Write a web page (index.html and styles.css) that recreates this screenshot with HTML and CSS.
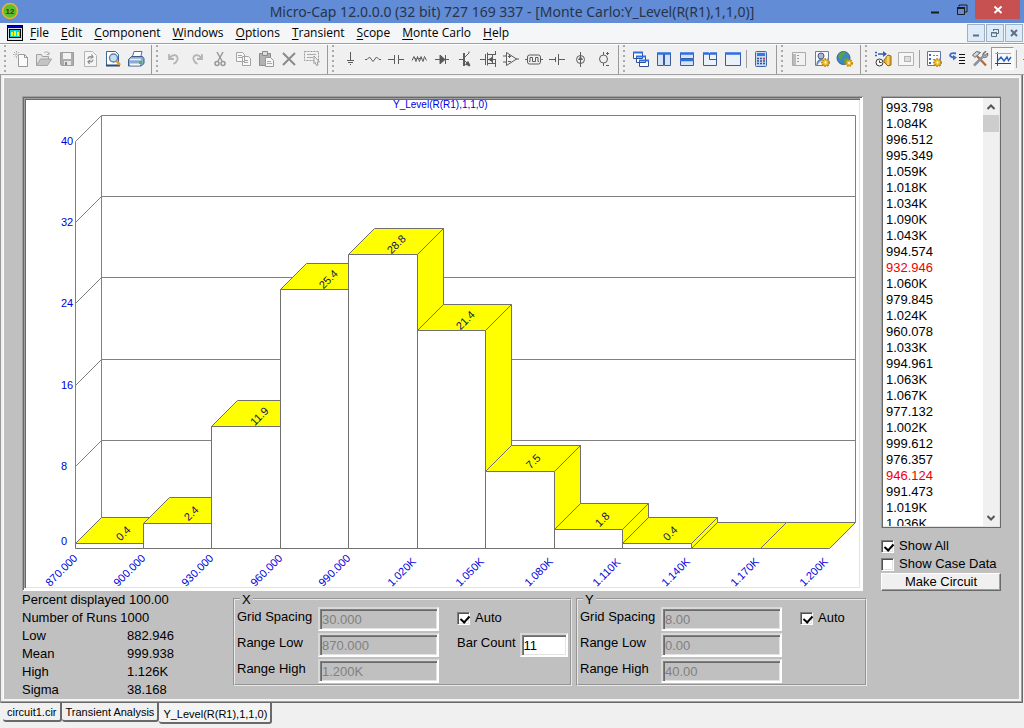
FILE: index.html
```html
<!DOCTYPE html>
<html lang="en">
<head>
<meta charset="utf-8">
<title>Micro-Cap 12.0.0.0 - Monte Carlo</title>
<link rel="stylesheet" href="styles.css">
</head>
<body>
<div class="app">
  <header class="titlebar">
    <svg class="app-icon" width="18" height="18" viewBox="0 0 18 18"><circle cx="9" cy="9" r="7.5" fill="#5cc02c" stroke="#f0b030" stroke-width="1.6"/><text x="9" y="12" text-anchor="middle" class="app-icon-text">12</text></svg>
    <h1 class="title">Micro-Cap 12.0.0.0 (32 bit) 727 169 337 - [Monte Carlo:Y_Level(R(R1),1,1,0)]</h1>
    <div class="window-buttons">
      <button class="wbtn" aria-label="Minimize"><svg width="14" height="14" viewBox="0 0 14 14"><path d="M3 9.500h8" stroke="#1c1c1c" stroke-width="2"/></svg></button>
      <button class="wbtn" aria-label="Restore"><svg width="14" height="14" viewBox="0 0 14 14" fill="none" stroke="#1c1c1c"><path d="M4 3.500V2h8v7h-2"/><path d="M2.500 4.500h7v7h-7z"/><path d="M2 5h8" stroke-width="2"/></svg></button>
      <button class="wbtn close" aria-label="Close"><svg width="14" height="14" viewBox="0 0 14 14"><path d="M3.500 3.500l7 6.500M10.500 3.500l-7 6.500" stroke="#fff" stroke-width="2"/></svg></button>
    </div>
  </header>

  <nav class="menubar">
    <svg width="16" height="16" viewBox="0 0 16 16"><path d="M0 0h16v16H0z" fill="#000"/><path d="M1 1h14v1H1z" fill="#0000d0"/><path d="M1 3h14v12H1z" fill="#ddd"/><path d="M2 4h12v9H2z" fill="#000"/><path d="M3 5h10v7H3z" fill="#00d8d8"/><path d="M4 7h2v4H4zM7 6h2v5H7zM10 7h2v4h-2z" fill="#ff0"/></svg>
    <div class="menus">
      <button><u>F</u>ile</button><button><u>E</u>dit</button><button><u>C</u>omponent</button><button><u>W</u>indows</button><button><u>O</u>ptions</button><button><u>T</u>ransient</button><button><u>S</u>cope</button><button><u>M</u>onte Carlo</button><button><u>H</u>elp</button>
    </div>
    <div class="mdi-buttons">
      <button aria-label="Minimize document"><svg width="12" height="12" viewBox="0 0 12 12"><path d="M3 8.500h6" stroke="#5d7083" stroke-width="2"/></svg></button>
      <button aria-label="Restore document"><svg width="12" height="12" viewBox="0 0 12 12" fill="none" stroke="#5d7083"><path d="M4.500 4V2.500h5v4H8M4 2.500h6M2.500 5.500h5v4h-5zM2 6h6"/></svg></button>
      <button aria-label="Close document"><svg width="12" height="12" viewBox="0 0 12 12"><path d="M3 3l6 6M9 3L3 9" stroke="#5d7083" stroke-width="2"/></svg></button>
    </div>
  </nav>

  <div class="toolbar">
    <div class="group">
      <button aria-label="New"><svg viewBox="0 0 18 18"><path d="M6.500 4.500h6l3 3v9h-9z" fill="#fafafa" stroke="#999"/><path d="M12.500 4.500v3h3" fill="none" stroke="#999"/><path d="M4.500 1v8M1 4.500h7M2 2l5 5M7 2L2 7" stroke="#aaa" stroke-dasharray="1.500 1"/></svg></button>
      <button aria-label="Open"><svg viewBox="0 0 18 18"><path d="M1.500 15.500v-11h5l1 2h6v3" fill="#e2e2e2" stroke="#a0a0a0"/><path d="M1.500 15.500l4-6.500h11l-4 6.500z" fill="#c4c4c4" stroke="#a4a4a4"/><path d="M9 3c2-2 4-1 5 1m0-2v2.500h-2.500" fill="none" stroke="#aaa"/></svg></button>
      <button aria-label="Save"><svg viewBox="0 0 18 18"><path d="M2.500 2.500h13v13h-12l-1-1z" fill="#acacac" stroke="#9c9c9c"/><path d="M5 3h8v6H5z" fill="#f2f2f2"/><path d="M6 11h7v4H6z" fill="#e5e5e5"/><path d="M7 12h2v3H7z" fill="#888"/></svg></button>
      <button aria-label="Revert"><svg viewBox="0 0 18 18"><path d="M3.500 1.500h8l4 4v11h-12z" fill="#f6f6f6" stroke="#b4b4b4"/><path d="M7 9c0-2 2-3 4-2M10.500 4.500L12 7l-2.500 1.500M12 9.500c0 2-2 3-4 2M8.500 14L7 11.500 9.500 10" fill="none" stroke="#8c8c8c" stroke-width="1.200"/></svg></button>
      <button aria-label="Print preview"><svg viewBox="0 0 18 18"><path d="M2.500 1.500h9l3 3v11h-12z" fill="#fff" stroke="#416291"/><path d="M2 15.500h14" stroke="#294978" stroke-width="2"/><circle cx="9.500" cy="8" r="4" fill="#bfe0f5" stroke="#63839f" stroke-width="1.400"/><path d="M12.500 11l3.500 4" stroke="#e09a35" stroke-width="2.500"/></svg></button>
      <button aria-label="Print"><svg viewBox="0 0 18 18"><path d="M5 8l2-6.500h8L13.500 8z" fill="#fff" stroke="#53709b"/><path d="M1.500 9.500l3-3h11l1.500 2v5l-3 2.500h-12.500z" fill="#8faace" stroke="#3b5c8d"/><path d="M3 9.500h11" stroke="#e9f2fc" stroke-width="1.500"/><path d="M3 13.500h10v2H3z" fill="#f8f8f8"/><path d="M12 11h3v3h-3z" fill="#36c832"/></svg></button>
    </div>
    <div class="group">
      <button aria-label="Undo"><svg viewBox="0 0 18 18"><path d="M4 4v5h5M4.500 8.500c3-5 9-4 8 1-.5 2-2 3.500-4 4.500" fill="none" stroke="#b4b4b4" stroke-width="1.800"/></svg></button>
      <button aria-label="Redo"><svg viewBox="0 0 18 18"><path d="M14 4v5H9M13.500 8.500c-3-5-9-4-8 1 .5 2 2 3.500 4 4.500" fill="none" stroke="#b4b4b4" stroke-width="1.800"/></svg></button>
      <button aria-label="Cut"><svg viewBox="0 0 18 18" fill="none" stroke="#999" stroke-width="1.500"><path d="M6 2l5 9M12 2l-5 9"/><circle cx="6" cy="13.500" r="2"/><circle cx="12" cy="13.500" r="2"/></svg></button>
      <button aria-label="Copy"><svg viewBox="0 0 18 18" fill="#f8f8f8" stroke="#a4a4a4"><path d="M2.500 2.500h6l2 2v7h-8zM8.500 6.500h6l2 2v7h-8z"/><path d="M4 5.500h4M4 7.500h4M10 10.500h4M10 12.500h4"/></svg></button>
      <button aria-label="Paste"><svg viewBox="0 0 18 18"><path d="M2.500 3.500h11v12h-11z" fill="#b2b2b2" stroke="#8c8c8c"/><path d="M5.500 1.500h5v4h-5z" fill="#ddd" stroke="#888"/><path d="M8.500 7.500h5l3 3v6h-8z" fill="#f6f6f6" stroke="#999"/><path d="M10 11.500h4M10 13.500h5" stroke="#aaa"/></svg></button>
      <button aria-label="Delete"><svg viewBox="0 0 18 18"><path d="M3 3l12 12M15 3L3 15" stroke="#8c8c8c" stroke-width="2"/></svg></button>
      <button aria-label="Select"><svg viewBox="0 0 18 18"><path d="M1.500 1.500h14v9h-14z" fill="none" stroke="#999" stroke-dasharray="2 1"/><path d="M4 4.500h9M4 7.500h6" stroke="#aaa"/><path d="M11 6l5.500 6H14l1 3-1.500.500-1.500-3-1 1z" fill="#f2f2f2" stroke="#999"/></svg></button>
    </div>
    <div class="group parts">
      <button aria-label="Ground"><svg viewBox="0 0 18 18"><path d="M9.500 2v8M6 10.500h7M7 12.500h5M9 14.500h1"/></svg></button>
      <button aria-label="Resistor"><svg viewBox="0 0 18 18"><path d="M1 9.500h2l2.500-2.500 3.500 4.500 3.500-4.500 2.500 2.500h2"/></svg></button>
      <button aria-label="Capacitor"><svg viewBox="0 0 18 18"><path d="M1 9.500h6M7.500 5v9M11.500 5v9M12 9.500h5"/></svg></button>
      <button aria-label="Inductor"><svg viewBox="0 0 18 18"><path d="M2 10.500l2-4 2 5 1.500-5 2 5 1.500-5 2 5 1.500-5 2 4"/><path d="M5 8.500h8" stroke-dasharray="1 1"/></svg></button>
      <button aria-label="Diode"><svg viewBox="0 0 18 18"><path d="M2 9.500h14M12.500 5v9"/><path d="M7 5l5 4.500L7 14z" fill="#555"/></svg></button>
      <button aria-label="NPN transistor"><svg viewBox="0 0 18 18"><path d="M3 9.500h4"/><path d="M8 3v13" stroke-width="2"/><path d="M9 7l4-4V1.500M9 11l4 4v1.500"/><path d="M14 15.500l-4.500-1 2.500-3z" fill="#555"/></svg></button>
      <button aria-label="MOSFET"><svg viewBox="0 0 18 18"><path d="M1 9.500h5M6.500 4v11M8.500 2.500v13M9 4.500h7M9 9.500h7M9 13.500h7M16.500 1v4M16.500 9v8M13.500 4v10"/><path d="M10 9.500l3-2v4z" fill="#555"/></svg></button>
      <button aria-label="Opamp"><svg viewBox="0 0 18 18"><path d="M4.500 2.500v13l10-6.500zM1 6h3M1 12h3M14 9h3M6 6.500h3M7.500 5v3M6 11.500h3"/></svg></button>
      <button aria-label="Pulse source"><svg viewBox="0 0 18 18"><path d="M0 9.500h2M16 9.500h2"/><rect x="2.500" y="5" width="13" height="9" rx="2"/><path d="M4 11.500h1v-4h2.500v4h3v-4H13v4h1"/></svg></button>
      <button aria-label="Battery"><svg viewBox="0 0 18 18"><path d="M1 9.500h6M7.500 7v5M10.500 4v11M11 9.500h6"/></svg></button>
      <button aria-label="Current source"><svg viewBox="0 0 18 18"><circle cx="9.500" cy="9.500" r="4"/><path d="M9.500 2v15M7.500 9.500l2-2.500 2 2.500z"/></svg></button>
      <button aria-label="Voltage source"><svg viewBox="0 0 18 18"><circle cx="9.500" cy="9" r="4"/><path d="M9.500 2v3M9.500 13v3M12 3.500h3M13.500 2v3M12 15.500h3"/></svg></button>
    </div>
    <div class="group">
      <button aria-label="Cascade"><svg viewBox="0 0 18 18" fill="#fff" stroke="#2c5095"><path d="M1.500 2.500h9v6h-9zM4.500 6.500h9v6h-9zM7.500 10.500h9v6h-9z"/><path d="M1 2.500h10M4 6.500h10M7 10.500h10" stroke="#2f6fe0" stroke-width="2"/></svg></button>
      <button aria-label="Tile vertical"><svg viewBox="0 0 18 18" fill="#d5e4f8" stroke="#3c5c98"><path d="M2.500 3.500h6v12h-6zM9.500 3.500h6v12h-6z"/><path d="M2 3.500h14" stroke="#2f6fe0" stroke-width="2.500"/></svg></button>
      <button aria-label="Tile horizontal"><svg viewBox="0 0 18 18" fill="#d5e4f8" stroke="#3c5c98"><path d="M2.500 3.500h13v5h-13zM2.500 10.500h13v5h-13z"/><path d="M2 3.500h14M2 10h14" stroke="#2f6fe0" stroke-width="2.500"/></svg></button>
      <button aria-label="Overlap"><svg viewBox="0 0 18 18" fill="#eaf1fb" stroke="#3c5c98"><path d="M2.500 3.500h13v12h-13zM8.500 3.500v6h7v-6"/><path d="M2 3.500h6M9 3.500h7" stroke="#2f6fe0" stroke-width="2.500"/></svg></button>
      <button aria-label="Maximize"><svg viewBox="0 0 18 18" fill="#eaf1fb" stroke="#3c5c98"><path d="M1.500 3.500h15v12h-15z"/><path d="M1 3.500h16" stroke="#2f6fe0" stroke-width="2.500"/></svg></button>
      <span class="sep"></span>
      <button aria-label="Calculator"><svg viewBox="0 0 18 18"><rect x="3.500" y="1.500" width="11" height="15" rx="1" fill="#c9daf2" stroke="#4267a9"/><path d="M5 3h8v3H5z" fill="#3977dc"/><path d="M5 8.500h8M5 11h8M5 13.500h8" stroke="#36528b" stroke-width="1.500" stroke-dasharray="2 1"/><path d="M11 8h2v1.500h-2z" fill="#d33"/></svg></button>
    </div>
    <div class="group">
      <button aria-label="Panel"><svg viewBox="0 0 18 18"><path d="M2.500 2.500h13v13h-13z" fill="#f1f1f1" stroke="#aaa"/><path d="M3 4h3v11H3z" fill="#bbb"/><path d="M7 5.500h2M7 8.500h2M7 11.500h2" stroke="#999"/></svg></button>
      <button aria-label="User settings"><svg viewBox="0 0 18 18"><path d="M2.500 1.500h13v14h-13z" fill="#f5f8ff" stroke="#6c7d96"/><circle cx="8" cy="6" r="3" fill="#a9b9d2" stroke="#465a7b"/><path d="M4 15c0-4 2-6 5-5" fill="#7fa3db" stroke="#465a7b"/><circle cx="12.500" cy="12.500" r="3.500" fill="#f2c222" stroke="#c18b10" stroke-width="2" stroke-dasharray="1.500 1"/><circle cx="12.500" cy="12.500" r="1" fill="#fff"/></svg></button>
      <button aria-label="Web settings"><svg viewBox="0 0 18 18"><circle cx="7.500" cy="8" r="6.500" fill="#3e85cc" stroke="#386185"/><path d="M2 6c2-4 5-5 8-4-1 3-3 2-3 4s-2 1-2 3-2 0-3-3zM8 9c3-3 5 0 5 1l-4 4c-1-2-2-3-1-5z" fill="#53a642"/><circle cx="13" cy="13" r="3" fill="#f2c222" stroke="#c18b10" stroke-width="2" stroke-dasharray="1.500 1"/><circle cx="13" cy="13" r="1" fill="#fff"/></svg></button>
    </div>
    <div class="group last">
      <button aria-label="Run"><svg viewBox="0 0 18 18"><path d="M1 2.500h2M1 5.500h2M4 4h6" stroke="#315fb5" stroke-width="1.500"/><path d="M9 1l4 3-4 3z" fill="#315fb5"/><circle cx="5.500" cy="12.500" r="3.500" fill="#fff" stroke="#333"/><path d="M5.500 10.500v2h2" fill="none" stroke="#333"/><path d="M10 10l4-5 3 1v9l-3 1-4-4z" fill="#e8b12c" stroke="#8e6915"/><path d="M14 6v9" stroke="#fff1b0"/></svg></button>
      <button aria-label="Watch"><svg viewBox="0 0 18 18"><path d="M1.500 2.500h15v13h-15z" fill="#f6f6f6" stroke="#b0b0b0"/><path d="M7 6h7v6H7z" fill="#b4b4b4"/><path d="M8 7h5v4H8z" fill="#ddd"/></svg></button>
      <span class="sep"></span>
      <button aria-label="Properties"><svg viewBox="0 0 18 18"><path d="M2.500 1.500h13v14h-13z" fill="#fff" stroke="#5c76a6"/><path d="M4 4h2v2H4zM4 8h2v2H4zM4 12h2v2H4z" fill="#3769c2"/><path d="M8 5.500h6M8 9.500h3" stroke="#888" stroke-dasharray="2 1"/><circle cx="12.500" cy="12.500" r="3.500" fill="#f2c222" stroke="#c18b10" stroke-width="2" stroke-dasharray="1.500 1"/><circle cx="12.500" cy="12.500" r="1" fill="#fff"/></svg></button>
      <button aria-label="Step"><svg viewBox="0 0 18 18"><path d="M8 3.500C1 2 0 7 6 7.500" fill="none" stroke="#3d6dc9" stroke-width="1.800"/><path d="M5 5l4 2.500L5 10.500z" fill="#3d6dc9"/><path d="M11 4.500h6M11 7.500h6M11 10.500h6M11 13.500h6" stroke="#111"/></svg></button>
      <button aria-label="Tools"><svg viewBox="0 0 18 18"><path d="M6 6l9 9.500" stroke="#b06a35" stroke-width="2.200"/><path d="M1.500 5l4-3.500 4 1L6.500 5 4 7.500z" fill="#cdd5df" stroke="#59636f"/><path d="M3 15.500l8.500-8.500" stroke="#8792a0" stroke-width="2.500"/><path d="M15 1.500l-2.500 2.500 1.500 1.500L16.500 3c1 3-1 5-4 4.500-2-2 0-6 2.500-6z" fill="#aeb8c4" stroke="#59636f"/></svg></button>
      <button class="pressed" aria-label="Plot" aria-pressed="true"><svg viewBox="0 0 18 18" fill="none"><path d="M3.500 2v14M1 13.500h16" stroke="#444"/><path d="M1 3.500h16" stroke="#aaa"/><path d="M3 11.500l4-4.500 3 4 3-4 1.500 3.500L17 7" stroke="#2a5fc4" stroke-width="1.400"/></svg></button>
      <span class="sep"></span>
      <button aria-label="More"><svg viewBox="0 0 18 18"><path d="M3.500 4v11M1 9.500h4" stroke="#777"/></svg></button>
    </div>
  </div>

  <main class="document">
    <section class="top">
      <div class="sunken chart">
        <svg viewBox="26 100 833 487" role="img" aria-label="Histogram of Y_Level(R(R1),1,1,0)">
          <text class="axis small" x="393" y="108">Y_Level(R(R1),1,1,0)</text>
          <g class="grid">
            <path d="M75.500 548.500V141.500L101.500 115.500H855.500V522.500M101.500 115.500V522.500M75.500 222.500L101.500 196.500H855.500M75.500 303.500L101.500 277.500H855.500M75.500 385.500L101.500 359.500H855.500M75.500 466.500L101.500 440.500H855.500M75.500 548.500H829"/>
          </g>
          <g class="bars">
            <path class="y" d="M75.500 543.500l26-26h68l-26 26z"/><path class="w" d="M75.500 543.500h68v5h-68z"/>
            <path class="y" d="M143.500 523.500l26-26h68v26l-26 25v-25z"/><path class="w" d="M143.500 523.500h68v25h-68z"/>
            <path class="y" d="M211.500 426.500l26-26h69l-26 26z"/><path class="w" d="M211.500 426.500h69v122h-69z"/>
            <path class="y" d="M280.500 289.500l26-26h68l-26 26z"/><path class="w" d="M280.500 289.500h68v259h-68z"/>
            <path class="y" d="M348.500 254.500l26-26h69l-26 26z"/><path class="y" d="M417.500 254.500l26-26v294l-26 26z"/><path class="w" d="M348.500 254.500h69v294h-69z"/>
            <path class="y" d="M417.500 330.500l26-26h68l-26 26z"/><path class="y" d="M485.500 330.500l26-26v218l-26 26z"/><path class="w" d="M417.500 330.500h68v218h-68z"/>
            <path class="y" d="M485.500 471.500l26-26h69l-26 26z"/><path class="y" d="M554.500 471.500l26-26v77l-26 26z"/><path class="w" d="M485.500 471.500h69v77h-69z"/>
            <path class="y" d="M554.500 529.500l26-26h68l-26 26z"/><path class="y" d="M622.500 529.500l26-26v19l-26 26z"/><path class="w" d="M554.500 529.500h68v19h-68z"/>
            <path class="y" d="M622.500 543.500l26-26h69l-26 26z"/><path class="y" d="M691.500 543.500l26-26v5l-26 26z"/><path class="w" d="M622.500 543.500h69v5h-69z"/>
            <path class="y" d="M691.500 548.500l26-26h69l-26 26z"/>
            <path class="y" d="M760.500 548.500l26-26h69l-26 26z"/>
          </g>
          <g class="values">
            <text transform="translate(126 536) rotate(-45)">0.4</text>
            <text transform="translate(194 516) rotate(-45)">2.4</text>
            <text transform="translate(262 419) rotate(-45)">11.9</text>
            <text transform="translate(331 282) rotate(-45)">25.4</text>
            <text transform="translate(399 247) rotate(-45)">28.8</text>
            <text transform="translate(468 323) rotate(-45)">21.4</text>
            <text transform="translate(536 464) rotate(-45)">7.5</text>
            <text transform="translate(605 522) rotate(-45)">1.8</text>
            <text transform="translate(673 536) rotate(-45)">0.4</text>
          </g>
          <g class="axis">
            <text x="61" y="145">40</text><text x="61" y="226">32</text><text x="61" y="307">24</text><text x="61" y="389">16</text><text x="61" y="470">8</text><text x="61" y="545">0</text>
            <text transform="translate(50 587) rotate(-45)">870.000</text>
            <text transform="translate(118 587) rotate(-45)">900.000</text>
            <text transform="translate(186 587) rotate(-45)">930.000</text>
            <text transform="translate(255 587) rotate(-45)">960.000</text>
            <text transform="translate(323 587) rotate(-45)">990.000</text>
            <text transform="translate(392 587) rotate(-45)">1.020K</text>
            <text transform="translate(460 587) rotate(-45)">1.050K</text>
            <text transform="translate(529 587) rotate(-45)">1.080K</text>
            <text transform="translate(597 587) rotate(-45)">1.110K</text>
            <text transform="translate(666 587) rotate(-45)">1.140K</text>
            <text transform="translate(735 587) rotate(-45)">1.170K</text>
            <text transform="translate(804 587) rotate(-45)">1.200K</text>
          </g>
        </svg>
      </div>

      <aside class="side">
        <div class="listbox">
          <ul>
            <li>993.798</li><li>1.084K</li><li>996.512</li><li>995.349</li><li>1.059K</li><li>1.018K</li><li>1.034K</li><li>1.090K</li><li>1.043K</li><li>994.574</li><li class="fail">932.946</li><li>1.060K</li><li>979.845</li><li>1.024K</li><li>960.078</li><li>1.033K</li><li>994.961</li><li>1.063K</li><li>1.067K</li><li>977.132</li><li>1.002K</li><li>999.612</li><li>976.357</li><li class="fail">946.124</li><li>991.473</li><li>1.019K</li><li>1.036K</li>
          </ul>
          <div class="scrollbar">
            <button aria-label="Scroll up"><svg width="10" height="8" viewBox="0 0 10 8"><path d="M1.500 6L5 2.500 8.500 6" fill="none" stroke="#555" stroke-width="2"/></svg></button>
            <span class="thumb"></span>
            <button class="down" aria-label="Scroll down"><svg width="10" height="8" viewBox="0 0 10 8"><path d="M1.500 2L5 5.500 8.500 2" fill="none" stroke="#555" stroke-width="2"/></svg></button>
          </div>
        </div>
        <label class="check"><input type="checkbox" checked>Show All</label>
        <label class="check"><input type="checkbox">Show Case Data</label>
        <button class="push">Make Circuit</button>
      </aside>
    </section>

    <section class="bottom">
      <div class="stats">
        <p>Percent displayed 100.00</p>
        <p>Number of Runs 1000</p>
        <dl>
          <dt>Low</dt><dd>882.946</dd>
          <dt>Mean</dt><dd>999.938</dd>
          <dt>High</dt><dd>1.126K</dd>
          <dt>Sigma</dt><dd>38.168</dd>
        </dl>
      </div>
      <fieldset class="range-x">
        <legend>X</legend>
        <div class="fields">
          <label for="xg">Grid Spacing</label><input id="xg" type="text" value="30.000" disabled>
          <label for="xl">Range Low</label><input id="xl" type="text" value="870.000" disabled>
          <label for="xh">Range High</label><input id="xh" type="text" value="1.200K" disabled>
        </div>
        <div class="extra">
          <label class="check"><input type="checkbox" checked>Auto</label>
          <div class="count"><label for="bc">Bar Count</label><input id="bc" type="text" value="11"></div>
        </div>
      </fieldset>
      <fieldset class="range-y">
        <legend>Y</legend>
        <div class="fields">
          <label for="yg">Grid Spacing</label><input id="yg" type="text" value="8.00" disabled>
          <label for="yl">Range Low</label><input id="yl" type="text" value="0.00" disabled>
          <label for="yh">Range High</label><input id="yh" type="text" value="40.00" disabled>
        </div>
        <div class="extra">
          <label class="check"><input type="checkbox" checked>Auto</label>
        </div>
      </fieldset>
    </section>
  </main>

  <nav class="tabs">
    <button>circuit1.cir</button><button>Transient Analysis</button><button class="active">Y_Level(R(R1),1,1,0)</button>
  </nav>
</div>
</body>
</html>
```
FILE: styles.css
```css
* { box-sizing: border-box; }
body {
  margin: 0;
  background: #f0f0f0;
  color: #000;
  font: 13px/18px "Liberation Sans", Arial, sans-serif;
}
button {
  margin: 0;
  padding: 0;
  border: 0;
  background: none;
  color: inherit;
  font: inherit;
}
h1, p, dl, dd, ul { margin: 0; padding: 0; }
svg { display: block; flex: none; }

.app { display: flex; flex-direction: column; min-height: 100vh; }

/* Title bar */
.titlebar {
  display: flex;
  align-items: flex-start;
  height: 23px;
  padding: 0 4px 0 1px;
  background: #628cd5;
}
.app-icon { margin-top: 2px; }
.app-icon-text { font-size: 8px; font-weight: bold; fill: #5c2a08; }
.title {
  flex: 1;
  padding-left: 84px;
  text-align: center;
  white-space: nowrap;
  font: 14px/24px "Noto Sans", "Open Sans", sans-serif;
  color: #27344a;
}
.window-buttons { display: flex; }
.wbtn { display: flex; justify-content: center; align-items: center; width: 27px; height: 19px; }
.close { width: 45px; background: #c75050; }

/* Menu bar */
.menubar {
  display: flex;
  align-items: center;
  height: 21px;
  padding: 0 1px 0 7px;
  background: #f5f6f7;
  border-bottom: 1px solid #a0a0a0;
}
.menus { display: flex; flex: 1; gap: 12px; padding-left: 7px; font: 12px/18px "Open Sans", "Noto Sans", sans-serif; }
.menus u { text-underline-offset: 2px; }
.mdi-buttons { display: flex; gap: 1px; }
.mdi-buttons button {
  display: flex;
  justify-content: center;
  align-items: center;
  width: 18px;
  height: 18px;
  border: 1px solid #9db0c4;
  background: #deebf8;
}

/* Toolbar */
.toolbar { display: flex; height: 31px; overflow: hidden; border-bottom: 1px solid #a0a0a0; border-top: 1px solid #fff; }
.group {
  display: flex;
  flex: none;
  align-items: center;
  padding: 0 4px 2px 10px;
  border-right: 1px solid #999;
  background: linear-gradient(#aaa 2px, transparent 2px) 4px 5px / 2px 5px repeat-y;
}
.group:first-child { padding-left: 9px; }
.group.last { border-right: 0; }
.group button { display: flex; justify-content: center; align-items: center; width: 23px; height: 23px; }
.group svg { width: 18px; height: 18px; }
.group .pressed { border: 1px solid #999; border-right-color: #fff; border-bottom-color: #fff; background: #f8f8f8; }
.parts svg { fill: none; stroke: #5c5c5c; }
.sep { width: 1px; height: 18px; margin: 0 2px; background: #a0a0a0; }

/* Document window */
.document {
  display: flex;
  flex-direction: column;
  margin-right: 1px;
  padding: 21px 22px 4px 22px;
  background: #c0c0c0;
  box-shadow: inset 1px 0 #999, inset -1px -1px #696969, inset -2px -2px #a0a0a0, inset 3px 2px #f0f0f0, inset -4px -4px #f4f4f4, inset 4px 3px #fff;
}
.top { display: flex; gap: 18px; }
.sunken, .listbox {
  padding: 4px;
  background: #fff;
  box-shadow: inset 1px 1px #a0a0a0, inset -1px -1px #fff, inset 2px 2px #696969, inset -3px -3px #fff, inset 3px 3px #a0a0a0, inset 4px 4px #696969, inset -4px -4px #e3e3e3;
}
.chart { flex: 1; min-width: 0; }
.chart svg { width: 100%; height: auto; font-size: 11px; }
.axis { fill: #0000e0; }
.small { font-size: 10px; }
.grid { fill: none; stroke: #808080; }
.bars { stroke: #707070; }
.y { fill: #ff0; }
.w { fill: #fff; }
.values { fill: #101060; text-anchor: middle; }

.side { display: flex; flex-direction: column; width: 120px; flex: none; }
.listbox {
  display: flex;
  flex: 1;
  contain: size;
  padding: 2px;
  margin-bottom: 9px;
  overflow: hidden;
  box-shadow: inset 1px 1px #a0a0a0, inset -1px -1px #696969, inset 2px 2px #696969, inset -2px -2px #e3e3e3;
}
.listbox ul { flex: 1; padding: 2px 0 0 3px; overflow: hidden; list-style: none; line-height: 16px; }
.fail { color: #f00000; }
.scrollbar { display: flex; flex-direction: column; width: 16px; background: #f0f0f0; }
.scrollbar button { display: flex; justify-content: center; align-items: center; height: 17px; }
.thumb { height: 17px; background: #cdcdcd; }
.scrollbar .down { margin-top: auto; }

.check { display: flex; align-items: center; gap: 5px; height: 18px; white-space: nowrap; }
.check input {
  appearance: none;
  flex: none;
  width: 13px;
  height: 13px;
  margin: 0;
  border: 1px solid #808080;
  border-right-color: #fff;
  border-bottom-color: #fff;
  background: #fff;
  box-shadow: inset 1px 1px #505050, inset -1px -1px #e3e3e3;
}
.check input:checked::after {
  content: "";
  display: block;
  width: 4px;
  height: 7px;
  margin: 1px 0 0 4px;
  border: solid #000;
  border-width: 0 2px 2px 0;
  transform: rotate(42deg);
}
.push {
  height: 18px;
  border: 1px solid #fff;
  border-right-color: #696969;
  border-bottom-color: #696969;
  background: #f0f0f0;
  box-shadow: inset -1px -1px #a0a0a0;
  line-height: 16px;
}

.bottom { display: flex; gap: 4px; margin-right: 134px; }
.stats { flex: 1; }
.stats dl { display: grid; grid-template-columns: 105px 1fr; }
fieldset {
  display: flex;
  margin: 0;
  padding: 0 3px 0 2px;
  height: 95px;
  border: 2px groove #e8e8e8;
  min-width: 0;
}
legend { height: 16px; margin-left: 3px; padding: 0 2px; line-height: 18px; }
.range-x { width: 339px; }
.range-y { width: 291px; }
.fields { display: grid; grid-template-columns: 81px 121px; grid-auto-rows: 24px; row-gap: 2px; align-items: start; }
.fields label, .count label { line-height: 20px; }
.extra { display: flex; flex-direction: column; gap: 6px; padding: 2px 0 0 18px; }
.count { display: flex; gap: 4px; white-space: nowrap; }
.count input { width: 48px; }
input[type="text"] {
  min-width: 0;
  height: 24px;
  padding: 0 2px;
  border: 2px solid #fff;
  border-top-color: #d8d8d8;
  border-left-color: #d8d8d8;
  background: #fff;
  box-shadow: inset 1px 1px #808080, inset 2px 2px #696969, inset -1px -1px #e3e3e3;
  font: inherit;
  color: #000;
}
input[type="text"]:disabled { background: #c0c0c0; color: #808080; }

/* Document tabs */
.tabs { display: flex; align-items: flex-start; padding: 0 3px; font-size: 11px; }
.tabs button {
  height: 19px;
  padding: 0 3px 0 4px;
  border: solid #696969;
  border-width: 0 2px 2px 0;
  border-radius: 0 0 3px 3px;
}
.tabs .active { height: 21px; padding-top: 2px; background: #f4f4f4; }
```
